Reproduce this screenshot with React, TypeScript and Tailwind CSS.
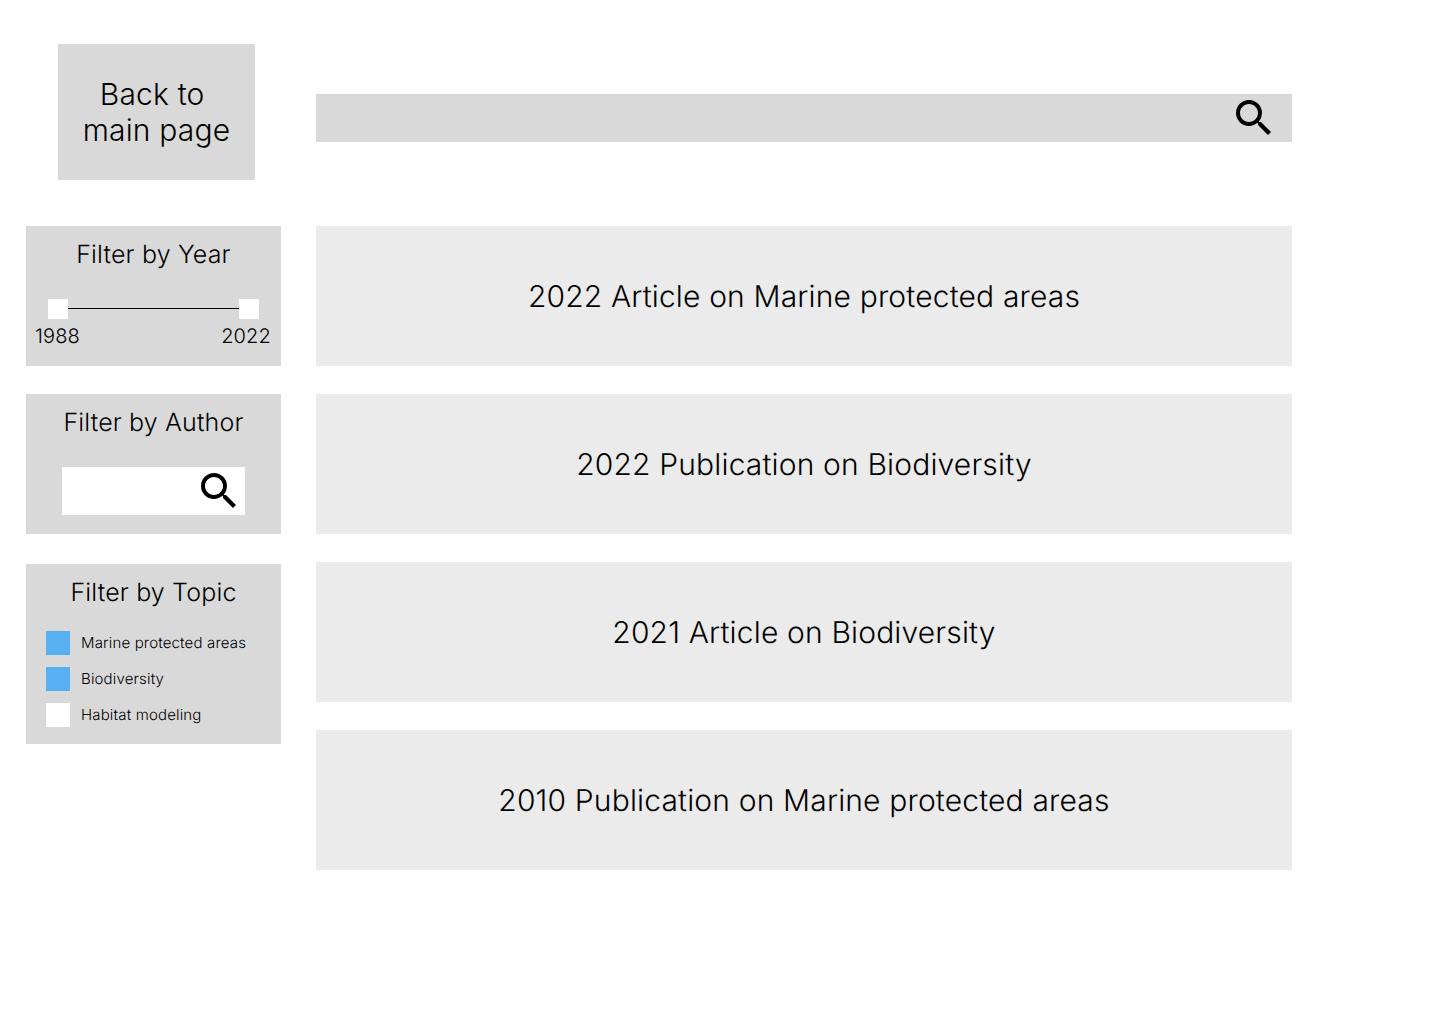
import React from 'react';

const results = [
  '2022 Article on Marine protected areas',
  '2022 Publication on Biodiversity',
  '2021 Article on Biodiversity',
  '2010 Publication on Marine protected areas',
];

const topics = [
  { label: 'Marine protected areas', checked: true },
  { label: 'Biodiversity', checked: true },
  { label: 'Habitat modeling', checked: false },
];

const SearchIcon = () => (
  <svg viewBox="0 0 24 24" className="w-12 h-12 shrink-0" fill="#000">
    <path d="M15.5 14h-.79l-.28-.27A6.471 6.471 0 0 0 16 9.5 6.5 6.5 0 1 0 9.5 16c1.61 0 3.09-.59 4.23-1.57l.27.28v.79l5 4.99L20.49 19l-4.99-5zm-6 0C7.01 14 5 11.99 5 9.5S7.01 5 9.5 5 14 7.01 14 9.5 11.99 14 9.5 14z" />
  </svg>
);

export default function App() {
  return (
    <div className="w-[1440px] h-[1024px] bg-white flex pl-[26px] text-black font-['Inter',sans-serif] font-[360] tracking-[0.01em] [text-rendering:geometricPrecision]">
      {/* Sidebar */}
      <div className="w-[255px] pt-[44px] flex flex-col">
        <button className="ml-[32px] w-[197px] h-[136px] bg-[#d9d9d9] text-[30px] leading-[36px] tracking-[0.006em]">
          Back to{'\u00a0'}
          <br />
          main page
        </button>

        <div className="mt-[46px] h-[140px] bg-[#d9d9d9] pt-[12px] flex flex-col">
          <h3 className="text-[25px] leading-[34px] text-center font-[360]">Filter by Year</h3>
          <div className="mt-[27px] mx-[22px] flex items-start">
            <div className="w-5 h-5 bg-white" />
            <div className="flex-1 h-px mt-[9px] bg-black" />
            <div className="w-5 h-5 bg-white" />
          </div>
          <div className="mt-[3px] pl-[9px] pr-[10px] flex justify-between text-[20px] leading-[28px]">
            <span>1988</span>
            <span>2022</span>
          </div>
        </div>

        <div className="mt-[28px] h-[140px] bg-[#d9d9d9] pt-[12px] flex flex-col">
          <h3 className="text-[25px] leading-[34px] text-center font-[360]">Filter by Author</h3>
          <div className="mt-[27px] ml-[36px] w-[183px] h-12 bg-white flex justify-end pr-[2px]">
            <SearchIcon />
          </div>
        </div>

        <div className="mt-[30px] h-[180px] bg-[#d9d9d9] pt-[12px] flex flex-col">
          <h3 className="text-[25px] leading-[34px] text-center font-[360]">Filter by Topic</h3>
          <div className="mt-[21px] pl-[20px] flex flex-col gap-3">
            {topics.map((topic) => (
              <div key={topic.label} className="flex items-center gap-[11px]">
                <div className={`w-6 h-6 ${topic.checked ? 'bg-[#58aff2]' : 'bg-white'}`} />
                <span className="text-[15px] leading-6">{topic.label}</span>
              </div>
            ))}
          </div>
        </div>
      </div>

      {/* Results */}
      <div className="ml-[35px] w-[976px] pt-[94px] flex flex-col">
        <div className="h-12 bg-[#d9d9d9] flex justify-end pr-[14px]">
          <SearchIcon />
        </div>
        <div className="mt-[84px] flex flex-col gap-[28px]">
          {results.map((title) => (
            <div key={title} className="h-[140px] pt-[2px] bg-[#ebebeb] flex items-center justify-center text-[30px]">
              {title}
            </div>
          ))}
        </div>
      </div>
    </div>
  );
}
